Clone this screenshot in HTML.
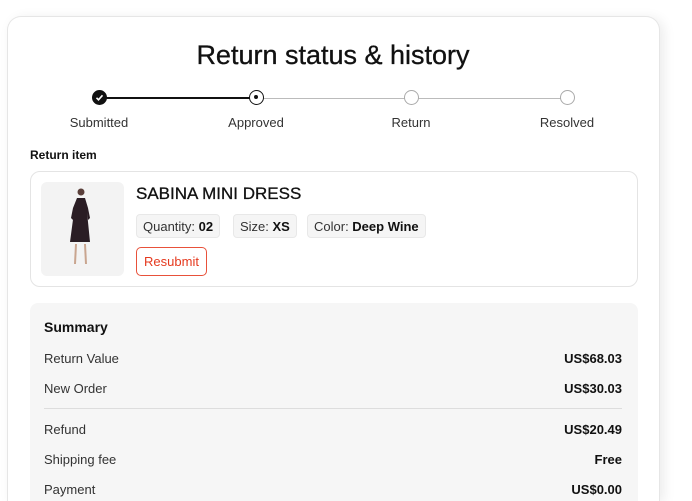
<!DOCTYPE html><html><head><style>
html,body{margin:0;width:692px;height:501px;overflow:hidden}
body{background:#fff;font-family:"Liberation Sans",sans-serif;color:#111;position:relative}
.card{position:absolute;left:7px;top:16px;width:653px;height:500px;border:1px solid #e6e6e6;border-bottom:none;border-radius:14px 14px 0 0;box-shadow:4px 2px 12px rgba(0,0,0,.08);background:#fff;box-sizing:border-box;height:485px}
.a{position:absolute}
.c{position:absolute;width:15px;height:15px;border-radius:50%;box-sizing:border-box;top:90px;background:#fff;border:1px solid #aaa}
.lbl{position:absolute;top:115px;font-size:13px;color:#333;transform:translateX(-50%);white-space:nowrap}
.chip{position:absolute;top:214px;height:24px;line-height:23px;background:#f5f5f5;border:1px solid #e8e8e8;border-radius:4px;font-size:13px;color:#333;padding:0 6px;box-sizing:border-box;white-space:nowrap}
.chip b{color:#111}
.row{position:absolute;left:44px;right:70px;font-size:13px;color:#333}
.row b{position:absolute;right:0;color:#111}
</style></head><body>
<div class="card"></div>
<div class="a" style="left:0;width:666px;top:40px;text-align:center;font-size:27px;-webkit-text-stroke:0.3px #111">Return status &amp; history</div>
<div class="a" style="left:99px;width:157px;top:97px;height:2px;background:#111"></div>
<div class="a" style="left:256px;width:311px;top:98px;height:1px;background:#bbb"></div>
<div class="c" style="left:92px;background:#111;border-color:#111"><svg width="13" height="13" viewBox="0 0 13 13"><path d="M3.5 6.8l2 2 4-4.5" stroke="#fff" stroke-width="1.6" fill="none"/></svg></div>
<div class="c" style="left:249px;border:1.5px solid #111"><div class="a" style="left:4px;top:4px;width:4px;height:4px;border-radius:50%;background:#111"></div></div>
<div class="c" style="left:404px"></div><div class="c" style="left:560px"></div>
<div class="lbl" style="left:99px">Submitted</div><div class="lbl" style="left:256px">Approved</div><div class="lbl" style="left:411px">Return</div><div class="lbl" style="left:567px">Resolved</div>
<div class="a" style="left:30px;top:148px;font-size:12px;font-weight:bold">Return item</div>
<div class="a" style="left:30px;top:171px;width:608px;height:116px;border:1px solid #e4e4e4;border-radius:10px;box-sizing:border-box"></div>
<div class="a" style="left:41px;top:182px;width:83px;height:94px;background:#f3f3f3;border-radius:6px"></div>
<svg class="a" style="left:64px;top:186px" width="34" height="86" viewBox="0 0 34 86"><circle cx="17" cy="6" r="3.5" fill="#5a3f3a"/><path d="M13 12h8l3 10 2 10-2 2-1-8 3 30H6l4-30-1 8-2-2 2-10z" fill="#2a1d24"/><path d="M12 58l-1 20M21 58l1 20" stroke="#c9a58f" stroke-width="2"/></svg>
<div class="a" style="left:136px;top:184px;font-size:17px;-webkit-text-stroke:0.3px #111">SABINA MINI DRESS</div>
<div class="chip" style="left:136px">Quantity: <b>02</b></div>
<div class="chip" style="left:233px">Size: <b>XS</b></div>
<div class="chip" style="left:307px">Color: <b>Deep Wine</b></div>
<div class="a" style="left:136px;top:247px;width:71px;height:29px;border:1px solid #e8513a;border-radius:5px;box-sizing:border-box;color:#e5391e;font-size:13px;line-height:27px;text-align:center">Resubmit</div>
<div class="a" style="left:30px;top:303px;width:608px;height:198px;background:#f6f6f6;border-radius:8px 8px 0 0"></div>
<div class="a" style="left:44px;top:319px;font-size:14px;font-weight:bold">Summary</div>
<div class="row" style="top:351px">Return Value<b>US$68.03</b></div>
<div class="row" style="top:381px">New Order<b>US$30.03</b></div>
<div class="a" style="left:44px;width:578px;top:408px;height:1px;background:#ddd"></div>
<div class="row" style="top:422px">Refund<b>US$20.49</b></div>
<div class="row" style="top:452px">Shipping fee<b>Free</b></div>
<div class="row" style="top:482px">Payment<b>US$0.00</b></div>
</body></html>
